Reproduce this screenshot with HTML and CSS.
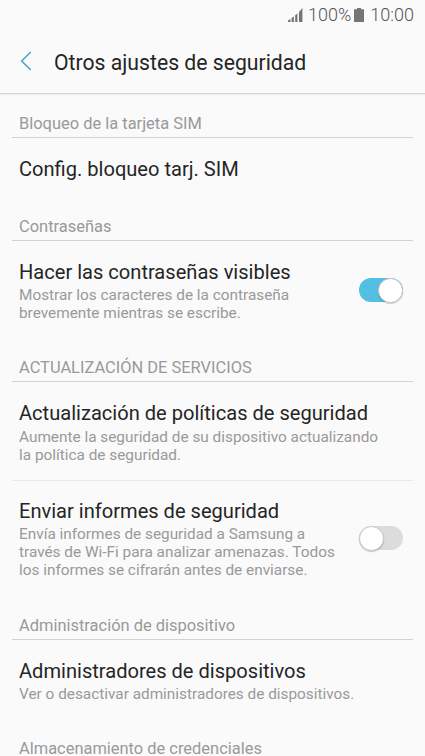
FILE: index.html
```html
<!DOCTYPE html>
<html lang="es">
<head>
    <meta charset="UTF-8">
    <meta name="viewport" content="width=device-width, initial-scale=1.0">
    <title>Otros ajustes de seguridad</title>
    <link rel="stylesheet" href="styles.css">
</head>
<body>

<div class="screen">
    <!-- Status bar -->
    <div class="status-bar">
        <svg class="signal" width="15" height="14" viewBox="0 0 15 14">
            <path d="M0 14v-1.5L2.5 11v3zM3.6 14v-4l2.3-1.4V14zM7.2 14V7.2l2.2-1.8V14zM11 14V4l3.4-4v14z"/>
        </svg>
        <span class="battery-level">100%</span>
        <svg class="battery" width="10" height="14" viewBox="0 0 10 14">
            <path d="M3 0h4v1.2h3V14H0V1.2h3z"/>
        </svg>
        <span class="clock">10:00</span>
    </div>

    <!-- App bar -->
    <header class="app-bar">
        <svg class="back" width="12" height="20" viewBox="0 0 12 20">
            <path d="M10.7 1L1.7 10l9 9"/>
        </svg>
        <h1 class="app-title">Otros ajustes de seguridad</h1>
    </header>

    <main class="list">
        <h2 class="section">Bloqueo de la tarjeta SIM</h2>
        <div class="item">
            <div class="item-text">
                <h3 class="title">Config. bloqueo tarj. SIM</h3>
            </div>
        </div>

        <h2 class="section">Contraseñas</h2>
        <div class="item">
            <div class="item-text">
                <h3 class="title">Hacer las contraseñas visibles</h3>
                <p class="summary">Mostrar los caracteres de la contraseña<br>brevemente mientras se escribe.</p>
            </div>
            <div class="switch switch-on"><span class="thumb"></span></div>
        </div>

        <h2 class="section">ACTUALIZACIÓN DE SERVICIOS</h2>
        <div class="item divided">
            <div class="item-text">
                <h3 class="title">Actualización de políticas de seguridad</h3>
                <p class="summary">Aumente la seguridad de su dispositivo actualizando<br>la política de seguridad.</p>
            </div>
        </div>
        <div class="item">
            <div class="item-text">
                <h3 class="title">Enviar informes de seguridad</h3>
                <p class="summary">Envía informes de seguridad a Samsung a<br>través de Wi-Fi para analizar amenazas. Todos<br>los informes se cifrarán antes de enviarse.</p>
            </div>
            <div class="switch"><span class="thumb"></span></div>
        </div>

        <h2 class="section">Administración de dispositivo</h2>
        <div class="item">
            <div class="item-text">
                <h3 class="title">Administradores de dispositivos</h3>
                <p class="summary">Ver o desactivar administradores de dispositivos.</p>
            </div>
        </div>

        <h2 class="section">Almacenamiento de credenciales</h2>
    </main>
</div>

</body>
</html>
```
FILE: styles.css
```css
* {
    box-sizing: border-box;
}
body {
    margin: 0;
    background-color: #fafafa;
    font-family: Roboto, "Liberation Sans", sans-serif;
    color: #252525;
}
h1, h2, h3, p {
    margin: 0;
    font-weight: 400;
    white-space: nowrap;
}
.screen {
    width: 425px;
    height: 756px;
    overflow: hidden;
}
/* Status bar */
.status-bar {
    display: flex;
    justify-content: flex-end;
    align-items: center;
    height: 29px;
    padding-right: 11px;
    font-size: 18px;
    font-weight: 300;
    color: #555;
}
.status-bar svg {
    fill: #757575;
}
.battery-level {
    margin: 0 3px 0 5px;
}
.clock {
    margin-left: 6px;
}
/* App bar */
.app-bar {
    display: flex;
    align-items: center;
    height: 65px;
    padding-left: 20px;
    border-bottom: 1px solid #d6d6d6;
    box-shadow: 0 1px 1px #ededed;
}
.back {
    fill: none;
    stroke: #4da6cb;
    stroke-width: 1.6;
}
.app-title {
    margin-left: 22px;
    padding-top: 3px;
    font-size: 21.2px;
    line-height: 24px;
}
/* Settings list */
.list {
    padding: 0 12px;
}
.section {
    height: 44px;
    padding: 20px 7px 0;
    border-bottom: 1px solid #d2d2d2;
    font-size: 16.45px;
    line-height: 20px;
    color: #999;
}
.item {
    display: flex;
    justify-content: space-between;
    align-items: center;
    padding: 19px 10px 16px 7px;
}
.divided {
    border-bottom: 1px solid #e8e8e8;
}
.divided .summary {
    padding-top: 3px;
}
.divided + .item {
    padding-top: 18px;
    padding-bottom: 17px;
}
.title {
    font-size: 20.08px;
    line-height: 24px;
}
.summary {
    padding-top: 2px;
    font-size: 15.35px;
    line-height: 18px;
    color: #999;
}
/* Toggle switch */
.switch {
    display: flex;
    align-items: center;
    width: 44px;
    height: 24px;
    margin-bottom: 2px;
    border-radius: 12px;
    background-color: #dcdcdc;
}
.switch-on {
    justify-content: flex-end;
    background-color: #53bfe2;
}
.thumb {
    width: 25px;
    height: 25px;
    border: 1px solid #c8c8c8;
    border-radius: 50%;
    background-color: #fff;
    box-shadow: 0 1px 1px rgba(0, 0, 0, 0.2);
}
```
